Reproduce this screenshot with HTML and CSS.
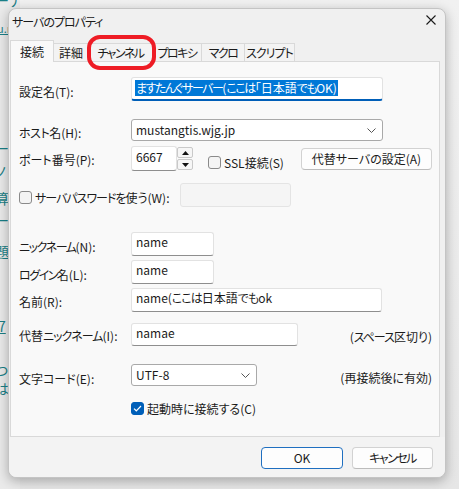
FILE: index.html
```html
<!DOCTYPE html>
<html lang="ja">
<head>
<meta charset="utf-8">
<title>サーバのプロパティ</title>
<link rel="stylesheet" href="styles.css">
</head>
<body>
<div class="desktop">
  <div class="backdrop">
    <span class="bg bg1">ーナ</span>
    <span class="bg bg2 u">u.r</span>
    <span class="bg bg3">ー</span>
    <span class="bg bg4">ノ</span>
    <span class="bg bg5">算</span>
    <span class="bg bg6">ー/</span>
    <span class="bg bg7">題</span>
    <span class="bg bg8 u">7</span>
    <span class="bg bg9">つ</span>
    <span class="bg bg10">は</span>
  </div>

  <div class="dialog">
    <div class="titlebar">
      <span class="title"><span class="k1">サーバのプロパティ</span></span>
      <svg class="close" width="10" height="10" viewBox="0 0 10 10"><path d="M0.5 0.5L9.5 9.5M9.5 0.5L0.5 9.5" stroke="#1a1a1a" stroke-width="1.1" fill="none"/></svg>
    </div>

    <div class="tabs">
      <div class="tab active t1">接続</div>
      <div class="tab t2">詳細</div>
      <div class="tab t3 k15">チャンネル</div>
      <div class="tab t4 k15">プロキシ</div>
      <div class="tab t5 k15">マクロ</div>
      <div class="tab t6 k1">スクリプト</div>
    </div>

    <div class="panel">
      <div class="row r1">
        <span class="lbl m7">設定名(T):</span>
        <div class="edit focus w252"><span class="sel"><span class="k15">ますたんぐサーバー</span>(<span class="k15">ここは</span>「日本語<span class="k15">でも</span>OK)</span></div>
      </div>

      <div class="row r2">
        <span class="lbl m6"><span class="k05">ホスト</span>名(H):</span>
        <div class="combo w252">
          <span>mustangtis.wjg.jp</span>
          <svg width="9" height="5" viewBox="0 0 9 5"><path d="M0.5 0.5L4.5 4.5L8.5 0.5" stroke="#555" stroke-width="1" fill="none"/></svg>
        </div>
      </div>

      <div class="row r3">
        <span class="lbl m6">ポート番号(P):</span>
        <div class="edit port"><span>6667</span></div>
        <div class="spin">
          <div class="spinbtn"><svg width="7" height="4" viewBox="0 0 7 4"><path d="M0 4L3.5 0L7 4Z" fill="#111"/></svg></div>
          <div class="spinbtn"><svg width="7" height="4" viewBox="0 0 7 4"><path d="M0 0L3.5 4L7 0Z" fill="#111"/></svg></div>
        </div>
        <span class="check ssl"></span>
        <span class="chktext ssltext">SSL接続(S)</span>
        <button class="btn alt">代替サーバの設定(A)</button>
      </div>

      <div class="row r4">
        <div class="lblwide">
          <span class="check pw"></span>
          <span class="chktext pwtext"><span class="k1">サーバパスワードを</span>使う(W):</span>
        </div>
        <div class="edit disabled w111"></div>
      </div>

      <div class="row r5">
        <span class="lbl m7"><span class="k15">ニックネーム</span>(N):</span>
        <div class="edit w83"><span>name</span></div>
      </div>

      <div class="row r6">
        <span class="lbl m7"><span class="k15">ログイン</span>名(L):</span>
        <div class="edit w83"><span>name</span></div>
      </div>

      <div class="row r7">
        <span class="lbl m6">名前(R):</span>
        <div class="edit w251"><span>name(<span class="k1">ここは</span>日本語<span class="k1">でも</span>ok</span></div>
      </div>

      <div class="row r8">
        <span class="lbl m5">代替<span class="k1">ニックネーム</span>(I):</span>
        <div class="edit h23 w167"><span>namae</span></div>
        <span class="note">(<span class="k1">スペース</span>区切り)</span>
      </div>

      <div class="row r9">
        <span class="lbl m7">文字コード(E):</span>
        <div class="combo w126">
          <span>UTF-8</span>
          <svg width="9" height="5" viewBox="0 0 9 5"><path d="M0.5 0.5L4.5 4.5L8.5 0.5" stroke="#555" stroke-width="1" fill="none"/></svg>
        </div>
        <span class="note">(再接続後に有効)</span>
      </div>

      <div class="row r10">
        <span class="lbl"></span>
        <span class="check checked">
          <svg width="9" height="7" viewBox="0 0 9 7"><path d="M1 3.6L3.3 5.8L8 1" stroke="#fff" stroke-width="1.2" fill="none"/></svg>
        </span>
        <span class="chktext">起動時に接続する(C)</span>
      </div>
    </div>

    <div class="footer">
      <button class="btn default ok">OK</button>
      <button class="btn cancel k15">キャンセル</button>
    </div>
  </div>

  <div class="ring"></div>
</div>
</body>
</html>
```

FILE: styles.css
```css
* { box-sizing: border-box; }
html, body { margin: 0; padding: 0; }
body {
  background: #ececec;
  font-family: "Noto Sans CJK JP", "Noto Sans", "Liberation Sans", sans-serif;
  font-size: 12px;
  color: #1b1b1b;
  font-feature-settings: "palt";
}

.k05 { letter-spacing: -0.5px; }
.k1 { letter-spacing: -1px; }
.k15 { letter-spacing: -1.5px; }

.desktop {
  position: relative;
  width: 459px;
  height: 489px;
  overflow: hidden;
  background: linear-gradient(#f1f1f1, #e6e6e6);
}

/* background web page peeking out on the left */
.backdrop { position: absolute; left: 0; top: 0; width: 20px; height: 489px; background: #eaeaea; }
.bg { position: absolute; left: -5px; color: #1a7f86; font-size: 14px; line-height: 16px; white-space: nowrap; }
.bg.u { text-decoration: underline; }
.bg1 { top: -8px; }
.bg2 { top: 20px; left: -3px; font-size: 11px; }
.bg3 { top: 140px; }
.bg4 { top: 163px; }
.bg5 { top: 190px; }
.bg6 { top: 212px; }
.bg7 { top: 243px; }
.bg8 { top: 318px; left: -2px; }
.bg9 { top: 362px; }
.bg10 { top: 380px; }

/* dialog window */
.dialog {
  position: absolute;
  left: 8px;
  top: 8px;
  width: 438px;
  height: 470px;
  background: #f0f0f0;
  border: 1px solid #c4c4c4;
  border-radius: 8px;
  box-shadow: 0 3px 12px rgba(0, 0, 0, 0.28);
  display: flex;
  flex-direction: column;
}

.titlebar {
  height: 26px;
  flex: none;
  display: flex;
  justify-content: space-between;
  align-items: flex-start;
  padding: 0 9px 0 3px;
}
.title { line-height: 16px; margin-top: 5px; color: #1a1a1a; }
.close { margin-top: 6px; }

.tabs {
  height: 26px;
  flex: none;
  display: flex;
  align-items: flex-end;
  padding-left: 1px;
}
.tab {
  height: 18px;
  line-height: 16px;
  padding-top: 1px;
  text-align: center;
  background: #f3f3f3;
  border: 1px solid #d9d9d9;
  border-bottom: none;
  margin-right: -1px;
  white-space: nowrap;
}
.tab.active {
  height: 22px;
  padding-top: 3px;
  background: #f9f9f9;
  position: relative;
  z-index: 1;
  margin-bottom: -1px;
}
.t1 { width: 44px; }
.t2 { width: 36px; }
.t3 { width: 65px; }
.t4 { width: 50px; }
.t5 { width: 44px; }
.t6 { width: 51px; }

.panel {
  width: 430px;
  height: 376px;
  margin-left: 1px;
  flex: none;
  background: #f9f9f9;
  border: 1px solid #d9d9d9;
  padding: 15px 7px 0 8px;
  display: flex;
  flex-direction: column;
}

.row { display: flex; align-items: flex-start; flex: none; }
.r2 { margin-top: 18px; }
.r3 { margin-top: 5px; }
.r4 { margin-top: 12px; }
.r5 { margin-top: 25px; }
.r6 { margin-top: 4px; }
.r7 { margin-top: 4px; }
.r8 { margin-top: 11px; }
.r9 { margin-top: 18px; }
.r10 { margin-top: 14px; }

.lbl { width: 112px; flex: none; line-height: 16px; white-space: nowrap; }
.m5 { margin-top: 5px; }
.m6 { margin-top: 6px; }
.m7 { margin-top: 7px; }

.edit {
  height: 24px;
  flex: none;
  background: #ffffff;
  border: 1px solid #e2e2e2;
  border-bottom-color: #8e8e8e;
  border-radius: 3px;
  padding: 1px 4px 0 4px;
  line-height: 16px;
  white-space: nowrap;
  overflow: hidden;
}
.edit.focus {
  border-bottom: 2px solid #005fb8;
  padding: 2px 3px 0 3px;
}
.edit.disabled { background: #f5f5f5; border-color: #e4e4e4; }
.edit.port { width: 46px; height: 25px; padding-top: 2px; }
.edit.h23 { height: 23px; }
.sel { background: #0078d7; color: #ffffff; display: inline-block; line-height: 16px; padding: 0 1px; }

.w252 { width: 252px; }
.w251 { width: 251px; }
.w167 { width: 167px; }
.w126 { width: 126px; }
.w111 { width: 111px; }
.w83 { width: 83px; }

.combo {
  height: 22px;
  flex: none;
  background: #ffffff;
  border: 1px solid #a9a9a9;
  border-radius: 3px;
  padding: 0 6px 0 4px;
  display: flex;
  align-items: center;
  justify-content: space-between;
  line-height: 16px;
}

.spin {
  width: 16px;
  height: 23px;
  margin-top: 1px;
  flex: none;
  display: flex;
  flex-direction: column;
  gap: 1px;
}
.spinbtn {
  flex: 1;
  background: #f6f6f6;
  border: 1px solid #c9c9c9;
  border-radius: 2px;
  display: flex;
  align-items: center;
  justify-content: center;
}

.check {
  width: 13px;
  height: 13px;
  flex: none;
  border: 1px solid #8a8a8a;
  border-radius: 3px;
  background: #f4f4f4;
  display: flex;
  align-items: center;
  justify-content: center;
}
.check.checked { background: #005fb8; border-color: #005fb8; margin-top: 1px; }
.check.ssl { margin: 10px 0 0 15px; }
.check.pw { margin-top: 8px; }
.chktext { line-height: 16px; margin-left: 3px; white-space: nowrap; }
.ssltext { margin-top: 9px; }
.pwtext { margin-top: 7px; }

.lblwide { width: 161px; flex: none; display: flex; align-items: flex-start; }

.note { margin-left: auto; margin-top: 6px; line-height: 16px; white-space: nowrap; }

.btn {
  font-family: inherit;
  font-size: 12px;
  font-feature-settings: "palt";
  color: #1b1b1b;
  height: 22px;
  padding: 0;
  background: #fdfdfd;
  border: 1px solid #d2d2d2;
  border-bottom-color: #bcbcbc;
  border-radius: 4px;
  line-height: 16px;
}
.btn.alt { width: 131px; margin: 2px 0 0 auto; }

.footer {
  flex: 1;
  display: flex;
  justify-content: flex-end;
  align-items: flex-start;
  gap: 9px;
  padding: 10px 12px 0 0;
  background: #f3f3f3;
  border-radius: 0 0 8px 8px;
}
.btn.ok { width: 82px; }
.btn.cancel { width: 81px; }
.btn.default { border: 1px solid #1f6fc0; }

/* red annotation ring around the チャンネル tab */
.ring {
  position: absolute;
  left: 87px;
  top: 35px;
  width: 69px;
  height: 35px;
  border: 4px solid #ee1c25;
  border-radius: 13px;
}
```
